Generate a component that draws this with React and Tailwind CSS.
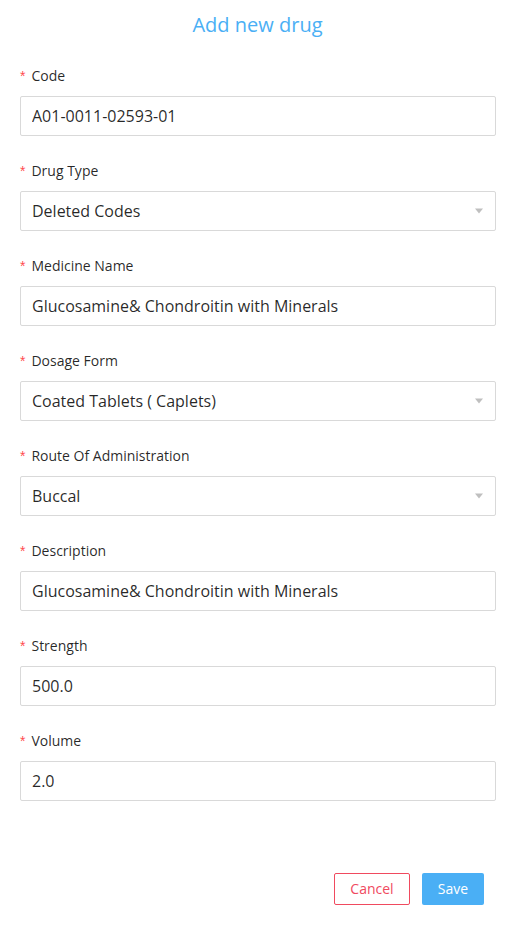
import { useState } from 'react';

const fields = [
  { label: 'Code', value: 'A01-0011-02593-01' },
  { label: 'Drug Type', value: 'Deleted Codes', select: true },
  { label: 'Medicine Name', value: 'Glucosamine& Chondroitin with Minerals' },
  { label: 'Dosage Form', value: 'Coated Tablets ( Caplets)', select: true },
  { label: 'Route Of Administration', value: 'Buccal', select: true },
  { label: 'Description', value: 'Glucosamine& Chondroitin with Minerals' },
  { label: 'Strength', value: '500.0' },
  { label: 'Volume', value: '2.0' },
];

function Field({ label, value, select }) {
  const [val, setVal] = useState(value);
  return (
    <div className="mb-6">
      <label className="block h-[22px] mb-[9px] text-sm leading-[22px] text-black/85">
        <span className="text-[#ff4d4f] mr-[6px] text-sm font-['Liberation_Sans',sans-serif]">*</span>
        {label}
      </label>
      <div className="relative w-[476px]">
        <input
          value={val}
          readOnly={select}
          onChange={e => setVal(e.target.value)}
          className="w-full h-10 px-[11px] border border-[#d9d9d9] rounded-[2px] text-base text-black/85 bg-white outline-none"
        />
        {select && (
          <span className="absolute right-[13px] top-1/2 -translate-y-1/2 w-0 h-0 border-l-[4px] border-r-[4px] border-t-[5px] border-l-transparent border-r-transparent border-t-[#bfbfbf]" />
        )}
      </div>
    </div>
  );
}

export default function App() {
  return (
    <div className="w-[513px] min-h-[938px] bg-white px-5 pt-[11px] font-['Open_Sans',sans-serif]">
      <h1 className="text-center text-xl leading-7 text-[#4aaff5] mb-[26px] pl-[2px]">Add new drug</h1>
      {fields.map(f => <Field key={f.label} {...f} />)}
      <div className="flex justify-end gap-3 pr-[9px] mt-[72px]">
        <button className="w-[76px] h-8 border border-[#f04a5f] rounded-[2px] text-sm text-[#f04a5f] bg-white">Cancel</button>
        <button className="w-[62px] h-8 rounded-[2px] text-sm text-white bg-[#4aaff5]">Save</button>
      </div>
    </div>
  );
}
